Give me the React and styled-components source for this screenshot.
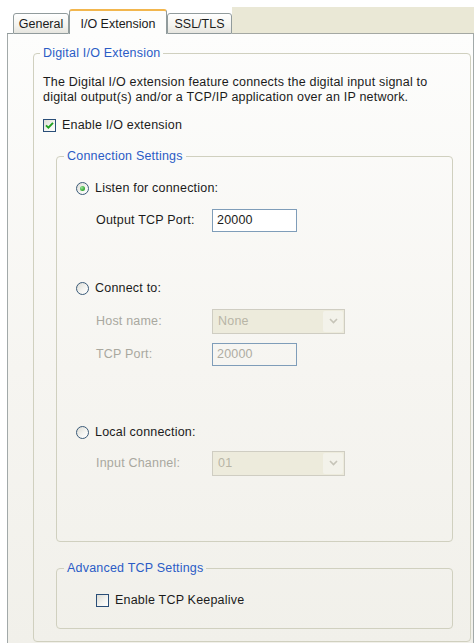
import styled, { createGlobalStyle } from "styled-components";

const GlobalStyle = createGlobalStyle`
  html, body {
    margin: 0;
    padding: 0;
    background: #ffffff;
  }
  body {
    font-family: "Liberation Sans", Arial, sans-serif;
    font-size: 12.5px;
    letter-spacing: 0.2px;
    color: #1b1b1b;
  }
`;

const Page = styled.div`
  width: 474px;
  height: 643px;
  overflow: hidden;
  padding-top: 7px;
  box-sizing: border-box;
  display: flex;
  flex-direction: column;
`;

const TabStrip = styled.div`
  display: flex;
  align-items: flex-end;
  height: 27px;
  margin-left: 7px;
`;

const TabGap = styled.div`
  width: 6px;
  height: 100%;
  box-sizing: border-box;
  border-bottom: 1px solid #919b9c;
`;

const Tab = styled.div`
  box-sizing: border-box;
  width: ${(p) => p.$width}px;
  height: ${(p) => (p.$active ? 25 : 21)}px;
  display: flex;
  align-items: center;
  justify-content: center;
  padding-top: ${(p) => (p.$active ? 2 : 1)}px;
  border: 1px solid #919b9c;
  border-bottom: ${(p) => (p.$active ? "none" : "1px solid #919b9c")};
  border-top: ${(p) =>
    p.$active ? "2px solid #f2b64e" : "1px solid #919b9c"};
  border-radius: 3px 3px 0 0;
  background: ${(p) =>
    p.$active
      ? "#fdfdfc"
      : "linear-gradient(to bottom, #ffffff 0%, #f3f3ef 60%, #e6e5df 100%)"};
  color: #1b1b1b;
  white-space: nowrap;
  letter-spacing: 0;
`;

const TabFiller = styled.div`
  flex: 1;
  height: 100%;
  box-sizing: border-box;
  background: #eae8d6;
  border-bottom: 1px solid #a4a8a3;
`;

const Panel = styled.div`
  flex: 1;
  margin-left: 7px;
  box-sizing: border-box;
  border-left: 1px solid #a2a9a9;
  border-right: 1px solid #a2a9a9;
  background: linear-gradient(to bottom, #fdfdfc 0%, #f6f5f1 55%, #f1f0ea 100%);
  padding: 12px 2px 0 25px;
`;

const GroupBox = styled.fieldset`
  margin: ${(p) => p.$margin || "0"};
  padding: ${(p) => p.$padding};
  border: 1px solid #d0d0bf;
  border-radius: 4px;
  min-inline-size: 0;
`;

const Legend = styled.legend`
  padding: 0 3px;
  margin-left: ${(p) => p.$shift}px;
  line-height: 14px;
  color: #2b5cc6;
`;

const Description = styled.p`
  margin: 0;
  line-height: 15px;
  white-space: nowrap;
`;

const CheckRow = styled.label`
  display: flex;
  align-items: center;
  gap: 6px;
  height: 16px;
  margin: ${(p) => p.$margin || "0"};
  white-space: nowrap;
`;

const CheckBox = styled.span`
  width: 13px;
  height: 13px;
  box-sizing: border-box;
  border: 1px solid #2a4e78;
  background: linear-gradient(135deg, #dcdcd5 0%, #f5f5f2 60%, #ffffff 100%);
  display: flex;
  align-items: center;
  justify-content: center;
  flex-shrink: 0;
`;

const RadioRow = styled.label`
  display: flex;
  align-items: center;
  gap: 6px;
  height: 16px;
  margin-top: ${(p) => p.$top}px;
  white-space: nowrap;
`;

const RadioCircle = styled.span`
  width: 13px;
  height: 13px;
  box-sizing: border-box;
  border-radius: 50%;
  border: 1px solid #3a5a78;
  background: linear-gradient(135deg, #dcdcd5 0%, #f6f6f3 60%, #ffffff 100%);
  display: flex;
  align-items: center;
  justify-content: center;
  flex-shrink: 0;
`;

const RadioDot = styled.span`
  width: 5px;
  height: 5px;
  border-radius: 50%;
  background: radial-gradient(circle at 35% 35%, #9be39b 0%, #3aad3a 60%, #21a121 100%);
`;

const FieldRow = styled.div`
  display: flex;
  align-items: center;
  height: 24px;
  margin-top: ${(p) => p.$top}px;
  margin-left: 20px;
`;

const FieldLabel = styled.span`
  width: 116px;
  flex-shrink: 0;
  white-space: nowrap;
  color: ${(p) => (p.$disabled ? "#a9a89f" : "#1b1b1b")};
`;

const TextBox = styled.div`
  box-sizing: border-box;
  width: 85px;
  height: 23px;
  border: 1px solid #7f9db9;
  background: ${(p) => (p.$disabled ? "transparent" : "#ffffff")};
  color: ${(p) => (p.$disabled ? "#aeaca2" : "#1b1b1b")};
  padding: 0 4px;
  display: flex;
  align-items: center;
`;

const Select = styled.div`
  box-sizing: border-box;
  width: 133px;
  height: 25px;
  border: 1px solid #cfcdc2;
  background: #edebdc;
  color: #b8b5a6;
  display: flex;
  align-items: center;
  padding: 1px;
`;

const SelectValue = styled.span`
  flex: 1;
  padding-left: 4px;
`;

const SelectButton = styled.span`
  width: 20px;
  height: 100%;
  box-sizing: border-box;
  background: #f3f2ea;
  border-radius: 2px;
  display: flex;
  align-items: center;
  justify-content: center;
`;

const Check = () => (
  <svg width="9" height="9" viewBox="0 0 9 9">
    <path
      d="M1 4.3 L3.4 6.7 L8 1.8"
      fill="none"
      stroke="#21a121"
      strokeWidth="1.9"
    />
  </svg>
);

const Chevron = () => (
  <svg width="9" height="6" viewBox="0 0 9 6">
    <path
      d="M1 1 L4.5 4.5 L8 1"
      fill="none"
      stroke="#c6c4b8"
      strokeWidth="1.6"
    />
  </svg>
);

const Radio = ({ checked, top, children }) => (
  <RadioRow $top={top}>
    <RadioCircle>{checked && <RadioDot />}</RadioCircle>
    {children}
  </RadioRow>
);

const CheckField = ({ checked, margin, children }) => (
  <CheckRow $margin={margin}>
    <CheckBox>{checked && <Check />}</CheckBox>
    {children}
  </CheckRow>
);

export default function App() {
  return (
    <Page>
      <GlobalStyle />
      <TabStrip>
        <TabGap />
        <Tab $width={56}>General</Tab>
        <Tab $width={98} $active>
          I/O Extension
        </Tab>
        <Tab $width={65}>SSL/TLS</Tab>
        <TabFiller />
      </TabStrip>

      <Panel>
        <GroupBox $padding="15px 17px 12px 9px">
          <Legend $shift={-3}>Digital I/O Extension</Legend>
          <Description>
            The Digital I/O extension feature connects the digital input signal to
            <br />
            digital output(s) and/or a TCP/IP application over an IP network.
          </Description>
          <CheckField checked margin="12px 0 0 0">
            Enable I/O extension
          </CheckField>

          <GroupBox $margin="16px 0 0 13px" $padding="17px 19px 66px 19px">
            <Legend $shift={-12}>Connection Settings</Legend>
            <Radio checked top={0}>
              Listen for connection:
            </Radio>
            <FieldRow $top={12}>
              <FieldLabel>Output TCP Port:</FieldLabel>
              <TextBox>20000</TextBox>
            </FieldRow>

            <Radio top={48}>Connect to:</Radio>
            <FieldRow $top={13}>
              <FieldLabel $disabled>Host name:</FieldLabel>
              <Select>
                <SelectValue>None</SelectValue>
                <SelectButton>
                  <Chevron />
                </SelectButton>
              </Select>
            </FieldRow>
            <FieldRow $top={9}>
              <FieldLabel $disabled>TCP Port:</FieldLabel>
              <TextBox $disabled>20000</TextBox>
            </FieldRow>

            <Radio top={58}>Local connection:</Radio>
            <FieldRow $top={11}>
              <FieldLabel $disabled>Input Channel:</FieldLabel>
              <Select>
                <SelectValue>01</SelectValue>
                <SelectButton>
                  <Chevron />
                </SelectButton>
              </Select>
            </FieldRow>
          </GroupBox>

          <GroupBox $margin="19px 0 0 13px" $padding="17px 19px 20px 19px">
            <Legend $shift={-12}>Advanced TCP Settings</Legend>
            <CheckField margin="0 0 0 20px">Enable TCP Keepalive</CheckField>
          </GroupBox>
        </GroupBox>
      </Panel>
    </Page>
  );
}
